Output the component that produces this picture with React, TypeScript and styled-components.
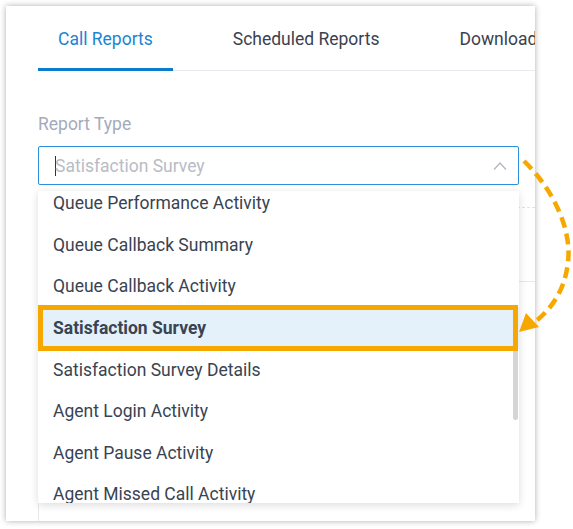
import React from 'react';
import styled, { createGlobalStyle } from 'styled-components';

const GlobalStyle = createGlobalStyle`
  html, body {
    margin: 0;
    padding: 0;
    background: #fff;
  }
  body {
    font-family: Roboto, "Liberation Sans", Arial, sans-serif;
  }
`;

const Page = styled.div`
  position: relative;
  width: 573px;
  height: 529px;
  overflow: hidden;
  background: #fff;
`;

const Panel = styled.div`
  margin: 6px 0 0 6px;
  width: 529px;
  height: 515px;
  background: #fff;
  box-shadow: 0 0 6px rgba(0, 0, 0, 0.32);
  overflow: hidden;
  display: flex;
  flex-direction: column;
  box-sizing: border-box;
  padding-left: 32px;
`;

const TabBar = styled.div`
  display: flex;
  gap: 40px;
  border-bottom: 1px solid #e8eaf0;
  margin-right: -40px;
  white-space: nowrap;
`;

const Tab = styled.div<{ $active?: boolean }>`
  position: relative;
  padding: 20px 20px 18px;
  font-size: 17.5px;
  line-height: 26px;
  color: ${({ $active }) => ($active ? '#1b84d3' : '#3a4250')};
  &::after {
    content: '';
    display: ${({ $active }) => ($active ? 'block' : 'none')};
    position: absolute;
    left: 0;
    right: 0;
    bottom: -1px;
    height: 3px;
    background: #0b7ccc;
  }
`;

const Body = styled.div`
  flex: 1;
  display: flex;
  flex-direction: column;
  padding-top: 41px;
`;

const Label = styled.div`
  font-size: 17.5px;
  line-height: 24px;
  color: #a4abbd;
  margin-bottom: 10px;
`;

const SelectWrap = styled.div`
  position: relative;
  width: 481px;
  z-index: 2;
`;

const SelectBox = styled.div`
  height: 39px;
  box-sizing: border-box;
  border: 1px solid #2b8fd9;
  border-radius: 2px;
  display: flex;
  align-items: center;
  justify-content: space-between;
  padding: 0 11px 0 16px;
  background: #fff;
`;

const Placeholder = styled.span`
  font-size: 17.5px;
  color: #b8bcc6;
  display: flex;
  align-items: center;
`;

const Caret = styled.span`
  display: inline-block;
  width: 1px;
  height: 20px;
  background: #2b3340;
  margin-right: -1px;
`;

const Menu = styled.div`
  position: absolute;
  left: 0;
  right: 0;
  top: calc(100% + 6px);
  height: 312px;
  background: #fff;
  box-shadow: 0 2px 8px rgba(0, 0, 0, 0.14);
  overflow: hidden;
`;

const MenuList = styled.div`
  margin-top: -8.5px;
`;

const Item = styled.div<{ $selected?: boolean }>`
  position: relative;
  height: 41.6px;
  display: flex;
  align-items: center;
  padding-left: 15px;
  font-size: 17.5px;
  color: #394352;
  font-weight: ${({ $selected }) => ($selected ? 700 : 400)};
  background: ${({ $selected }) => ($selected ? '#e4f1fa' : 'transparent')};
  z-index: ${({ $selected }) => ($selected ? 2 : 0)};
  &::after {
    content: '';
    display: ${({ $selected }) => ($selected ? 'block' : 'none')};
    position: absolute;
    left: 0;
    right: 1px;
    top: -2px;
    bottom: -2px;
    border: 5px solid #f7a800;
  }
`;

const Thumb = styled.div`
  position: absolute;
  right: 1px;
  top: 118px;
  width: 5px;
  height: 111px;
  border-radius: 3px;
  background: #d5d5d5;
  z-index: 1;
`;

const Divider = styled.div`
  margin-top: 22px;
  border-top: 1px dashed #dfe2ea;
`;

const TableBox = styled.div`
  flex: 1;
  margin-top: 73px;
  margin-right: -20px;
  border-top: 1px solid #e6e8ee;
  border-left: 1px solid #e6e8ee;
`;

const Annotation = styled.svg`
  position: absolute;
  left: 0;
  top: 0;
  pointer-events: none;
  z-index: 5;
`;

const items = [
  'Queue Performance Activity',
  'Queue Callback Summary',
  'Queue Callback Activity',
  'Satisfaction Survey',
  'Satisfaction Survey Details',
  'Agent Login Activity',
  'Agent Pause Activity',
  'Agent Missed Call Activity',
];

const App = () => {
  return (
    <Page>
      <GlobalStyle />
      <Panel>
        <TabBar>
          <Tab $active>Call Reports</Tab>
          <Tab>Scheduled Reports</Tab>
          <Tab>Download</Tab>
        </TabBar>
        <Body>
          <Label>Report Type</Label>
          <SelectWrap>
            <SelectBox>
              <Placeholder>
                <Caret />
                Satisfaction Survey
              </Placeholder>
              <svg width="14" height="8" viewBox="0 0 14 8">
                <path d="M1 7.5 L7 1 L13 7.5" fill="none" stroke="#b3b7bf" strokeWidth="1.3" />
              </svg>
            </SelectBox>
            <Menu>
              <MenuList>
                {items.map((name) => (
                  <Item key={name} $selected={name === 'Satisfaction Survey'}>
                    {name}
                  </Item>
                ))}
              </MenuList>
              <Thumb />
            </Menu>
          </SelectWrap>
          <Divider />
          <TableBox />
        </Body>
      </Panel>
      <Annotation width="573" height="529" viewBox="0 0 573 529">
        <path
          d="M524 161 C552 188 572 228 568 262 C565 290 552 308 536 321"
          fill="none"
          stroke="#f7a800"
          strokeWidth="4.5"
          strokeDasharray="11 6"
        />
        <polygon points="519,332 526,313 539,327" fill="#f7a800" />
      </Annotation>
    </Page>
  );
};

export default App;
